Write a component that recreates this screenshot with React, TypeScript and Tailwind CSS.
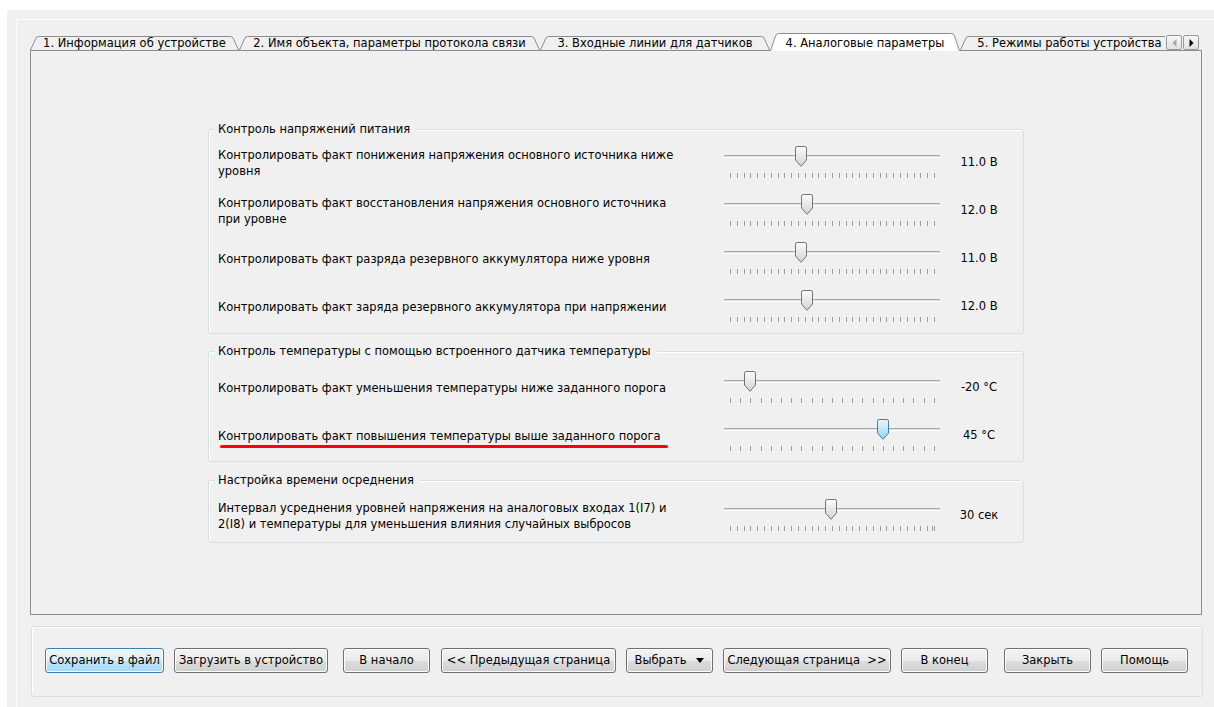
import React from "react";

type TabDef = { label: string; w: number; cls: string; active?: boolean };

const tabs: TabDef[] = [
  { label: "1. Информация об устройстве", w: 209, cls: "w-[209px]" },
  { label: "2. Имя объекта, параметры протокола связи", w: 301, cls: "w-[301px]" },
  { label: "3. Входные линии для датчиков", w: 230, cls: "w-[230px]" },
  { label: "4. Аналоговые параметры", w: 190, cls: "w-[190px]", active: true },
  { label: "5. Режимы работы устройства", w: 219, cls: "w-[219px]" },
];

function TabShape({ w, h, active }: { w: number; h: number; active?: boolean }) {
  const t = 0.5;
  const d = `M0.5,${h} L5.5,${t + 2.5} Q6.3,${t} 8.5,${t} L${w - 8.5},${t} Q${w - 6.3},${t} ${w - 5.5},${t + 2.5} L${w - 0.5},${h}`;
  return (
    <svg width={w} height={h} className="absolute left-0 top-0">
      <path d={d} fill={active ? "#ffffff" : "#f0f0f0"} stroke="#8a8c91" strokeWidth="1" />
    </svg>
  );
}

function Tab({ tab }: { tab: TabDef }) {
  if (tab.active) {
    return (
      <div className={`relative shrink-0 h-[18px] ${tab.cls}`}>
        <TabShape w={tab.w} h={18} active />
        <div className="relative pt-[3px] leading-[14px] text-center whitespace-nowrap">{tab.label}</div>
      </div>
    );
  }
  return (
    <div className={`relative shrink-0 h-[14px] mb-[1px] ${tab.cls}`}>
      <TabShape w={tab.w} h={14} />
      <div className="relative leading-[14px] text-center whitespace-nowrap">{tab.label}</div>
    </div>
  );
}

function ScrollArrow({ dir, enabled }: { dir: "left" | "right"; enabled: boolean }) {
  return (
    <div className="w-[16px] h-[15px] border border-[#9a9a9a] rounded-[2px] bg-[linear-gradient(#f6f6f6,#e2e2e2)] flex items-center justify-center">
      <svg width="5" height="8" viewBox="0 0 5 8">
        {dir === "left" ? (
          <polygon points="4.5,0 4.5,8 0.5,4" fill={enabled ? "#000000" : "#a8a8a8"} />
        ) : (
          <polygon points="0.5,0 0.5,8 4.5,4" fill={enabled ? "#000000" : "#a8a8a8"} />
        )}
      </svg>
    </div>
  );
}

function Thumb({ left, active }: { left: number; active?: boolean }) {
  const id = active ? "thumb-blue" : "thumb-gray";
  return (
    <svg width="12" height="21" viewBox="0 0 12 21" className="absolute top-0" style={{ left }}>
      <defs>
        <linearGradient id={id} x1="0" y1="0" x2="0" y2="1">
          {active ? (
            <>
              <stop offset="0" stopColor="#eaf7fe" />
              <stop offset="1" stopColor="#96d2f3" />
            </>
          ) : (
            <>
              <stop offset="0" stopColor="#fcfcfc" />
              <stop offset="1" stopColor="#d2d2d2" />
            </>
          )}
        </linearGradient>
      </defs>
      <path
        d="M2.2,0.5 H9.8 Q11.5,0.5 11.5,2.2 V14 L6,20.3 L0.5,14 V2.2 Q0.5,0.5 2.2,0.5 Z"
        fill={`url(#${id})`}
        stroke={active ? "#3c7fb1" : "#747474"}
      />
    </svg>
  );
}

function Slider({ pos, ticks, active, extraTick }: { pos: number; ticks: number; active?: boolean; extraTick?: boolean }) {
  return (
    <div className="relative w-[216px] h-[34px] shrink-0">
      <div className="mt-[9px] h-[3px] border-t border-[#a6a6a6] bg-[#e2e2e2] border-b border-b-white" />
      <div className="mt-[15px] ml-[6px] mr-[5px] h-[5px] flex justify-between">
        {Array.from({ length: ticks }).map((_, i) => (
          <div key={i} className="w-px h-full bg-[#9c9c9c]" />
        ))}
      </div>
      {extraTick && <div className="absolute right-[7px] top-[27px] w-px h-[5px] bg-[#9c9c9c]" />}
      <Thumb left={pos} active={active} />
    </div>
  );
}

type RowDef = {
  label: React.ReactNode;
  value: string;
  pos: number;
  ticks: number;
  active?: boolean;
  marked?: boolean;
  extraTick?: boolean;
};

function Row({ row }: { row: RowDef }) {
  return (
    <div className="h-[48px] flex items-center">
      <div className="relative w-[515px] pl-[9px] leading-[16px] shrink-0">
        {row.label}
        {row.marked && <div className="absolute left-[11px] top-[17px] w-[448px] h-[3px] rounded-full bg-[#ff0000]" />}
      </div>
      <Slider pos={row.pos} ticks={row.ticks} active={row.active} extraTick={row.extraTick} />
      <div className="ml-[10px] w-[58px] text-center whitespace-nowrap">{row.value}</div>
    </div>
  );
}

function Group({ title, cls, bodyCls, rows }: { title: string; cls: string; bodyCls: string; rows: RowDef[] }) {
  return (
    <div className={`w-[816px] border border-[#d5dfe5] rounded-[3px] shadow-[inset_1px_1px_0_#ffffff] ${cls}`}>
      <div className="-mt-[8px] ml-[6px] w-fit pl-[3px] pr-[6px] bg-[#f0f0f0] leading-[15px] whitespace-nowrap">{title}</div>
      <div className={bodyCls}>
        {rows.map((r, i) => (
          <Row key={i} row={r} />
        ))}
      </div>
    </div>
  );
}

const power: RowDef[] = [
  {
    label: (
      <>
        Контролировать факт понижения напряжения основного источника ниже
        <br />
        уровня
      </>
    ),
    value: "11.0 В",
    pos: 71,
    ticks: 31,
  },
  {
    label: (
      <>
        Контролировать факт восстановления напряжения основного источника
        <br />
        при уровне
      </>
    ),
    value: "12.0 В",
    pos: 77,
    ticks: 31,
  },
  { label: "Контролировать факт разряда резервного аккумулятора ниже уровня", value: "11.0 В", pos: 71, ticks: 31 },
  { label: "Контролировать факт заряда резервного аккумулятора при напряжении", value: "12.0 В", pos: 77, ticks: 31 },
];

const temperature: RowDef[] = [
  { label: "Контролировать факт уменьшения температуры ниже заданного порога", value: "-20 °C", pos: 20, ticks: 21 },
  {
    label: "Контролировать факт повышения температуры выше заданного порога",
    value: "45 °C",
    pos: 153,
    ticks: 21,
    active: true,
    marked: true,
  },
];

const averaging: RowDef[] = [
  {
    label: (
      <>
        Интервал усреднения уровней напряжения на аналоговых входах 1(I7) и
        <br />
        2(I8) и температуры для уменьшения влияния случайных выбросов
      </>
    ),
    value: "30 сек",
    pos: 101,
    ticks: 31,
    extraTick: true,
  },
];

function Btn({ children, cls, primary }: { children: React.ReactNode; cls: string; primary?: boolean }) {
  const look = primary
    ? "border-[#3c7fb1] bg-[linear-gradient(#eaf6fd_0%,#d9f0fc_50%,#bee6fd_50%,#a7d9f5_100%)]"
    : "border-[#707070] bg-[linear-gradient(#f2f2f2_0%,#ebebeb_50%,#dddddd_50%,#cfcfcf_100%)]";
  return (
    <div
      className={`h-[25px] shrink-0 border rounded-[3px] shadow-[inset_0_0_0_1px_#fcfcfc] flex items-center justify-center whitespace-nowrap ${look} ${cls}`}
    >
      {children}
    </div>
  );
}

export default function App() {
  return (
    <div className="w-[1214px] h-[707px] bg-white flex overflow-hidden text-[11.5px] text-black font-['DejaVu_Sans','Liberation_Sans',sans-serif]">
      <div className="ml-[7px] mt-[10px] flex-1 bg-[#f0f0f0] flex">
        <div className="mt-[9px] ml-[9px] flex-1 border-t border-l border-[#fbfcfd] pl-[13px] pt-[13px]">
          {/* tab strip */}
          <div className="w-[1172px] h-[17px] flex items-start relative z-10">
            <div className="w-[1135px] h-[18px] overflow-hidden flex items-end">
              {tabs.map((t) => (
                <Tab key={t.label} tab={t} />
              ))}
            </div>
            <div className="ml-[1px] mt-[2px] flex gap-[1px]">
              <ScrollArrow dir="left" enabled={false} />
              <ScrollArrow dir="right" enabled />
            </div>
          </div>

          {/* tab page */}
          <div className="w-[1172px] h-[565px] border border-[#898c95] bg-[#f0f0f0] pl-[177px] pt-[78px]">
            <Group title="Контроль напряжений питания" cls="" bodyCls="mt-[2px] pb-[2px]" rows={power} />
            <Group
              title="Контроль температуры с помощью встроенного датчика температуры"
              cls="mt-[17px]"
              bodyCls="mt-[5px] pb-[1px]"
              rows={temperature}
            />
            <Group title="Настройка времени осреднения" cls="mt-[18px]" bodyCls="mt-[4px] pb-[2px]" rows={averaging} />
          </div>

          {/* command buttons */}
          <div className="mt-[11px] ml-[1px] w-[1172px] h-[71px] border border-[#d5dfe5] rounded-[3px] shadow-[inset_1px_1px_0_#ffffff] pt-[21px] flex items-start">
            <Btn primary cls="ml-[13px] w-[119px]">Сохранить в файл</Btn>
            <Btn cls="ml-[10px] w-[154px]">Загрузить в устройство</Btn>
            <Btn cls="ml-[15px] w-[87px]">В начало</Btn>
            <Btn cls="ml-[11px] w-[175px]">&lt;&lt; Предыдущая страница</Btn>
            <Btn cls="ml-[10px] w-[87px]">
              <span>Выбрать</span>
              <svg width="8" height="5" viewBox="0 0 8 5" className="ml-[10px]">
                <polygon points="0,0 8,0 4,5" fill="#000000" />
              </svg>
            </Btn>
            <Btn cls="ml-[10px] w-[168px]">Следующая страница&nbsp; &gt;&gt;</Btn>
            <Btn cls="ml-[10px] w-[87px]">В конец</Btn>
            <Btn cls="ml-[16px] w-[87px]">Закрыть</Btn>
            <Btn cls="ml-[10px] w-[87px]">Помощь</Btn>
          </div>
        </div>
      </div>
    </div>
  );
}
